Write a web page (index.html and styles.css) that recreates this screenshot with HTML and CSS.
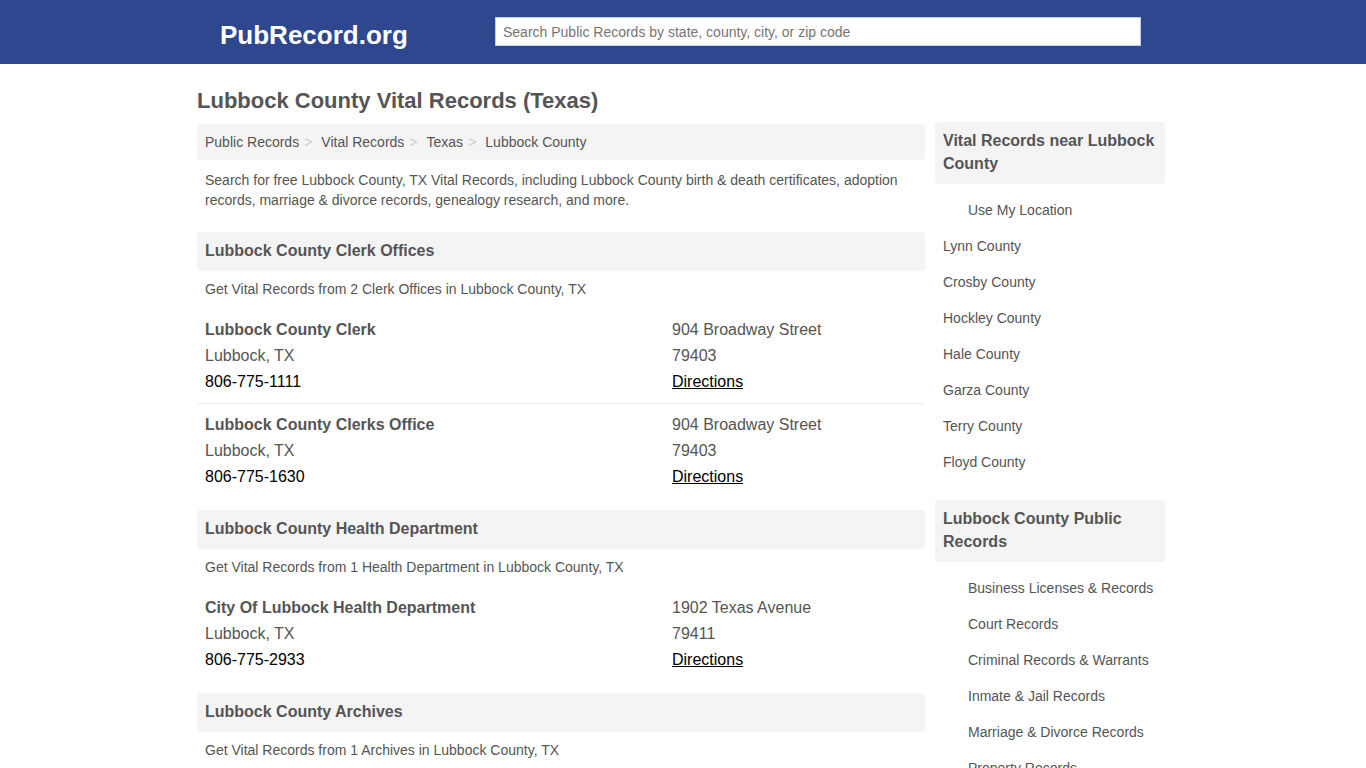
FILE: index.html
```
<!DOCTYPE html>
<html lang="en">
<head>
    <meta charset="UTF-8">
    <meta name="viewport" content="width=device-width, initial-scale=1.0">
    <title>Lubbock County Vital Records (Texas)</title>
    <link rel="stylesheet" href="styles.css">
</head>
<body>
    <header>
        <div class="header-inner">
            <a class="logo" href="#">PubRecord.org</a>
            <form class="search">
                <input type="text" name="q" aria-label="Search Public Records" placeholder="Search Public Records by state, county, city, or zip code">
            </form>
        </div>
    </header>

    <div class="container">
        <h1>Lubbock County Vital Records (Texas)</h1>
        <div class="columns">
            <main>
                <ul class="breadcrumb">
                    <li><a href="#">Public Records</a></li>
                    <li><a href="#">Vital Records</a></li>
                    <li><a href="#">Texas</a></li>
                    <li><a href="#">Lubbock County</a></li>
                </ul>
                <p class="intro">Search for free Lubbock County, TX Vital Records, including Lubbock County birth &amp; death certificates, adoption records, marriage &amp; divorce records, genealogy research, and more.</p>

                <section>
                    <h2>Lubbock County Clerk Offices</h2>
                    <p class="summary">Get Vital Records from 2 Clerk Offices in Lubbock County, TX</p>
                    <div class="office">
                        <div>
                            <h3>Lubbock County Clerk</h3>
                            <p>Lubbock, TX</p>
                            <a class="phone" href="tel:8067751111">806-775-1111</a>
                        </div>
                        <div>
                            <p>904 Broadway Street</p>
                            <p>79403</p>
                            <a class="directions" href="#">Directions</a>
                        </div>
                    </div>
                    <div class="office">
                        <div>
                            <h3>Lubbock County Clerks Office</h3>
                            <p>Lubbock, TX</p>
                            <a class="phone" href="tel:8067751630">806-775-1630</a>
                        </div>
                        <div>
                            <p>904 Broadway Street</p>
                            <p>79403</p>
                            <a class="directions" href="#">Directions</a>
                        </div>
                    </div>
                </section>

                <section>
                    <h2>Lubbock County Health Department</h2>
                    <p class="summary">Get Vital Records from 1 Health Department in Lubbock County, TX</p>
                    <div class="office">
                        <div>
                            <h3>City Of Lubbock Health Department</h3>
                            <p>Lubbock, TX</p>
                            <a class="phone" href="tel:8067752933">806-775-2933</a>
                        </div>
                        <div>
                            <p>1902 Texas Avenue</p>
                            <p>79411</p>
                            <a class="directions" href="#">Directions</a>
                        </div>
                    </div>
                </section>

                <section>
                    <h2>Lubbock County Archives</h2>
                    <p class="summary">Get Vital Records from 1 Archives in Lubbock County, TX</p>
                </section>
            </main>

            <aside>
                <section>
                    <h2>Vital Records near Lubbock County</h2>
                    <ul class="links">
                        <li class="indent"><a href="#">Use My Location</a></li>
                        <li><a href="#">Lynn County</a></li>
                        <li><a href="#">Crosby County</a></li>
                        <li><a href="#">Hockley County</a></li>
                        <li><a href="#">Hale County</a></li>
                        <li><a href="#">Garza County</a></li>
                        <li><a href="#">Terry County</a></li>
                        <li><a href="#">Floyd County</a></li>
                    </ul>
                </section>
                <section>
                    <h2>Lubbock County Public Records</h2>
                    <ul class="links">
                        <li class="indent"><a href="#">Business Licenses &amp; Records</a></li>
                        <li class="indent"><a href="#">Court Records</a></li>
                        <li class="indent"><a href="#">Criminal Records &amp; Warrants</a></li>
                        <li class="indent"><a href="#">Inmate &amp; Jail Records</a></li>
                        <li class="indent"><a href="#">Marriage &amp; Divorce Records</a></li>
                        <li class="indent"><a href="#">Property Records</a></li>
                    </ul>
                </section>
            </aside>
        </div>
    </div>
</body>
</html>
```
FILE: styles.css
```
* {
    box-sizing: border-box;
}

body {
    margin: 0;
    background-color: #fff;
    color: #555;
    font-family: Arial, "Liberation Sans", sans-serif;
    font-size: 14px;
    line-height: 20px;
}

h1, h2, h3, p, ul {
    margin: 0;
    padding: 0;
}

ul {
    list-style: none;
}

a {
    color: #555;
    text-decoration: none;
}

header {
    background-color: #2e478f;
}

.header-inner,
.container {
    max-width: 972px;
    margin: 0 auto;
}

.header-inner {
    display: flex;
    align-items: flex-start;
    height: 64px;
    padding: 17px 28px 0 23px;
}

.logo {
    flex: 0 0 275px;
    color: #fff;
    font-size: 26px;
    font-weight: bold;
    line-height: 36px;
}

.search {
    flex: 1;
}

.search input {
    display: block;
    width: 100%;
    height: 29px;
    padding: 1px 7px 0;
    border: 1px solid #b5d0f5;
    background-color: #fff;
    color: #555;
    font: 14px Arial, "Liberation Sans", sans-serif;
}

.search input::placeholder {
    color: #757575;
}

.container {
    padding: 23px 4px 0 0;
}

h1 {
    font-size: 22px;
    line-height: 28px;
    margin-bottom: 7px;
}

.columns {
    display: flex;
    align-items: flex-start;
    gap: 10px;
}

main {
    flex: 1;
    padding-top: 2px;
}

aside {
    flex: 0 0 230px;
}

h2 {
    padding: 7px 8px 9px;
    border-radius: 4px;
    background-color: #f4f4f4;
    font-size: 16px;
    line-height: 23px;
}

.breadcrumb {
    display: flex;
    padding: 8px;
    border-radius: 4px;
    background-color: #f4f4f4;
}

.breadcrumb li + li::before {
    content: ">";
    padding: 0 9px 0 5px;
    color: #ccc;
}

.intro {
    padding: 10px 8px;
    margin-bottom: 12px;
}

.summary {
    padding: 8px 8px 10px;
}

main section {
    margin-bottom: 12px;
}

.office {
    display: grid;
    grid-template-columns: 1fr 245px;
    padding: 8px;
    border-bottom: 1px solid #eee;
    font-size: 16px;
    line-height: 26px;
}

.office:last-child {
    border-bottom: none;
}

.office h3 {
    font-size: 16px;
}

.phone,
.directions {
    color: #000;
}

.directions {
    text-decoration: underline;
}

aside section {
    margin-bottom: 20px;
}

.links {
    padding-top: 8px;
}

.links li {
    padding: 8px;
}

.links .indent {
    padding-left: 33px;
}
```
